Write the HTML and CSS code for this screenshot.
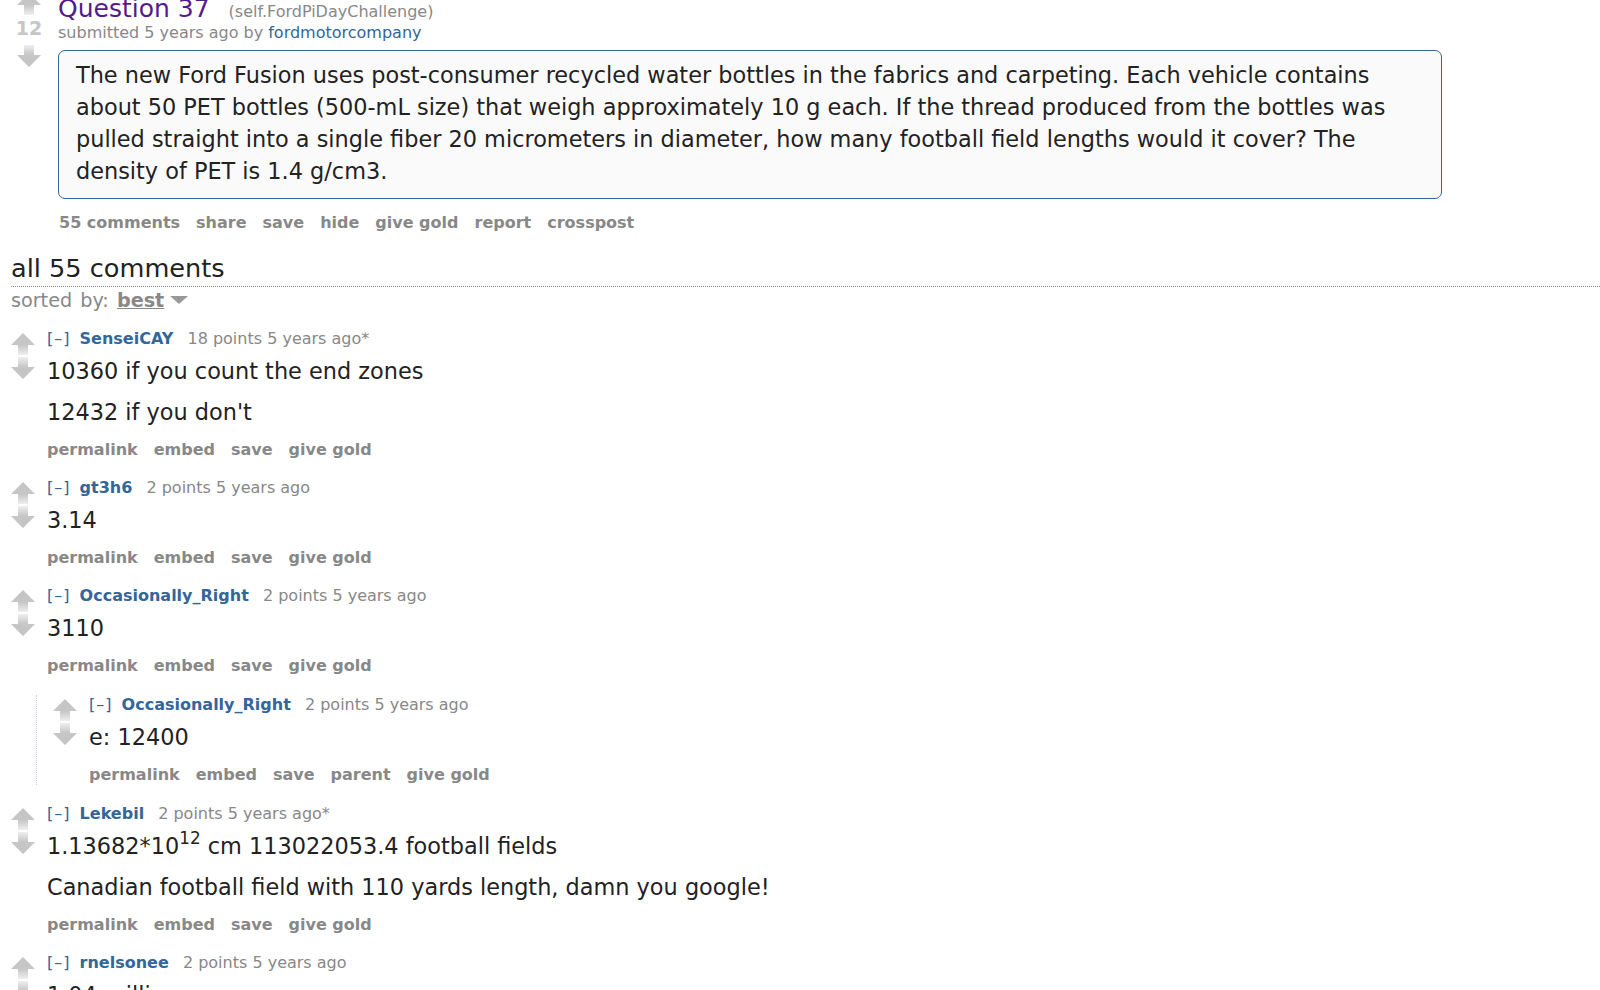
FILE: index.html
```html
<!DOCTYPE html>
<html>
  <head>
    <meta charset="UTF-8">
    <title>Question 37 : FordPiDayChallenge</title>
    <link rel="stylesheet" href="styles.css">
  </head>
  <body>
    <svg class="defs" width="0" height="0">
      <defs>
        <linearGradient id="fade_up" x1="0" y1="0" x2="0" y2="1">
          <stop offset="0" stop-color="#c4c4c4"/>
          <stop offset="0.55" stop-color="#c6c6c6"/>
          <stop offset="1" stop-color="#efefef"/>
        </linearGradient>
        <linearGradient id="fade_down" x1="0" y1="0" x2="0" y2="1">
          <stop offset="0" stop-color="#efefef"/>
          <stop offset="0.45" stop-color="#c6c6c6"/>
          <stop offset="1" stop-color="#c4c4c4"/>
        </linearGradient>
        <symbol id="arrow_up" viewBox="0 0 24 22">
          <path d="M12 0 L24 12 L17 12 L17 22 L7 22 L7 12 L0 12 Z" fill="url(#fade_up)"/>
        </symbol>
        <symbol id="arrow_down" viewBox="0 0 24 22">
          <path d="M7 0 L17 0 L17 10 L24 10 L12 22 L0 10 L7 10 Z" fill="url(#fade_down)"/>
        </symbol>
      </defs>
    </svg>

    <div class="content">
      <!-- 投稿 -->
      <div class="thing link">
        <div class="midcol">
          <svg class="arrow"><use href="#arrow_up"/></svg>
          <div class="score">12</div>
          <svg class="arrow down"><use href="#arrow_down"/></svg>
        </div>
        <div class="entry">
          <p class="title"><a class="title_link" href="#">Question 37</a><span class="domain">(self.FordPiDayChallenge)</span></p>
          <p class="tagline">submitted 5 years ago by <a class="user" href="#">fordmotorcompany</a></p>
          <div class="expando">
            <div class="md">
              <p>The new Ford Fusion uses post-consumer recycled water bottles in the fabrics and carpeting. Each vehicle contains about 50 PET bottles (500-mL size) that weigh approximately 10 g each. If the thread produced from the bottles was pulled straight into a single fiber 20 micrometers in diameter, how many football field lengths would it cover? The density of PET is 1.4 g/cm3.</p>
            </div>
          </div>
          <ul class="buttons">
            <li><a href="#">55 comments</a></li>
            <li><a href="#">share</a></li>
            <li><a href="#">save</a></li>
            <li><a href="#">hide</a></li>
            <li><a href="#">give gold</a></li>
            <li><a href="#">report</a></li>
            <li><a href="#">crosspost</a></li>
          </ul>
        </div>
      </div>

      <!-- コメント -->
      <div class="commentarea">
        <div class="panestack_title">all 55 comments</div>
        <div class="menuarea">sorted by: <a class="selected" href="#">best</a><span class="droparrow"></span></div>

        <div class="sitetable">
          <div class="comment">
            <div class="row">
              <div class="midcol">
                <svg class="arrow"><use href="#arrow_up"/></svg>
                <svg class="arrow"><use href="#arrow_down"/></svg>
              </div>
              <div class="entry">
                <p class="tagline"><a class="expand" href="#">[–]</a> <a class="author" href="#">SenseiCAY</a> 18 points 5 years ago*</p>
                <div class="usertext_body md">
                  <p>10360 if you count the end zones</p>
                  <p>12432 if you don't</p>
                </div>
                <ul class="buttons">
                  <li><a href="#">permalink</a></li>
                  <li><a href="#">embed</a></li>
                  <li><a href="#">save</a></li>
                  <li><a href="#">give gold</a></li>
                </ul>
              </div>
            </div>
          </div>

          <div class="comment">
            <div class="row">
              <div class="midcol">
                <svg class="arrow"><use href="#arrow_up"/></svg>
                <svg class="arrow"><use href="#arrow_down"/></svg>
              </div>
              <div class="entry">
                <p class="tagline"><a class="expand" href="#">[–]</a> <a class="author" href="#">gt3h6</a> 2 points 5 years ago</p>
                <div class="usertext_body md">
                  <p>3.14</p>
                </div>
                <ul class="buttons">
                  <li><a href="#">permalink</a></li>
                  <li><a href="#">embed</a></li>
                  <li><a href="#">save</a></li>
                  <li><a href="#">give gold</a></li>
                </ul>
              </div>
            </div>
          </div>

          <div class="comment has_child">
            <div class="row">
              <div class="midcol">
                <svg class="arrow"><use href="#arrow_up"/></svg>
                <svg class="arrow"><use href="#arrow_down"/></svg>
              </div>
              <div class="entry">
                <p class="tagline"><a class="expand" href="#">[–]</a> <a class="author" href="#">Occasionally_Right</a> 2 points 5 years ago</p>
                <div class="usertext_body md">
                  <p>3110</p>
                </div>
                <ul class="buttons">
                  <li><a href="#">permalink</a></li>
                  <li><a href="#">embed</a></li>
                  <li><a href="#">save</a></li>
                  <li><a href="#">give gold</a></li>
                </ul>
              </div>
            </div>
            <div class="child">
              <div class="comment">
                <div class="row">
                  <div class="midcol">
                    <svg class="arrow"><use href="#arrow_up"/></svg>
                    <svg class="arrow"><use href="#arrow_down"/></svg>
                  </div>
                  <div class="entry">
                    <p class="tagline"><a class="expand" href="#">[–]</a> <a class="author" href="#">Occasionally_Right</a> 2 points 5 years ago</p>
                    <div class="usertext_body md">
                      <p>e: 12400</p>
                    </div>
                    <ul class="buttons">
                      <li><a href="#">permalink</a></li>
                      <li><a href="#">embed</a></li>
                      <li><a href="#">save</a></li>
                      <li><a href="#">parent</a></li>
                      <li><a href="#">give gold</a></li>
                    </ul>
                  </div>
                </div>
              </div>
            </div>
          </div>

          <div class="comment">
            <div class="row">
              <div class="midcol">
                <svg class="arrow"><use href="#arrow_up"/></svg>
                <svg class="arrow"><use href="#arrow_down"/></svg>
              </div>
              <div class="entry">
                <p class="tagline"><a class="expand" href="#">[–]</a> <a class="author" href="#">Lekebil</a> 2 points 5 years ago*</p>
                <div class="usertext_body md">
                  <p>1.13682*10<sup>12</sup> cm 113022053.4 football fields</p>
                  <p>Canadian football field with 110 yards length, damn you google!</p>
                </div>
                <ul class="buttons">
                  <li><a href="#">permalink</a></li>
                  <li><a href="#">embed</a></li>
                  <li><a href="#">save</a></li>
                  <li><a href="#">give gold</a></li>
                </ul>
              </div>
            </div>
          </div>

          <div class="comment">
            <div class="row">
              <div class="midcol">
                <svg class="arrow"><use href="#arrow_up"/></svg>
                <svg class="arrow"><use href="#arrow_down"/></svg>
              </div>
              <div class="entry">
                <p class="tagline"><a class="expand" href="#">[–]</a> <a class="author" href="#">rnelsonee</a> 2 points 5 years ago</p>
                <div class="usertext_body md">
                  <p>1.04 million</p>
                </div>
              </div>
            </div>
          </div>
        </div>
      </div>
    </div>
  </body>
</html>
```

FILE: styles.css
```css
body
{
  margin: 0;
  padding: 0 0 0 11px;
  font-family: "DejaVu Sans", Verdana, sans-serif;
  color: #222;
  background: #fff;
  overflow: hidden;
}
a
{
  text-decoration: none;
}
p
{
  margin: 0;
}
.defs
{
  position: absolute; /* 定義だけなので場所をとらない */
}
.content
{
  margin-top: -7px; /* 少しスクロールした状態 */
}

/* 投稿 */
.link
{
  display: flex;
}
.link .midcol
{
  width: 28px;
  margin-left: 4px;
  display: flex;
  flex-direction: column;
  align-items: center;
}
.arrow
{
  display: block;
  width: 24px;
  height: 22px;
}
.score
{
  margin-top: 2px;
  font-size: 19px;
  line-height: 22px;
  font-weight: bold;
  color: #c6c6c6;
}
.link .arrow.down
{
  margin-top: 6px;
}
.link .entry
{
  margin-left: 15px;
  margin-top: 2px;
}
.title
{
  font-size: 25px;
  line-height: 28px;
}
.title_link
{
  color: #551a8b;
}
.domain
{
  margin-left: 19px;
  font-size: 16px;
  line-height: 16px;
  color: #888;
}
.tagline
{
  font-size: 16px;
  line-height: 20px;
  color: #888;
}
.user
{
  color: #369;
}
.expando
{
  margin-top: 7px;
  width: 1384px;
  box-sizing: border-box;
  border: 1px solid #369;
  border-radius: 7px;
  background: #fafafa;
  padding: 8px 8px 11px 17px;
}
.md p
{
  font-size: 22.4px;
  line-height: 32px;
  color: #222;
}
.buttons
{
  list-style: none;
  margin: 0;
  padding: 0;
  display: flex;
  gap: 16px;
  font-size: 16px;
  line-height: 20px;
  font-weight: bold;
}
.buttons a
{
  color: #888;
}
.link .buttons
{
  margin-top: 14px;
  padding-left: 1px;
}

/* コメント欄 */
.panestack_title
{
  margin-top: 20px;
  padding-bottom: 3px;
  border-bottom: 1px dotted #888;
  font-size: 25.6px;
  line-height: 30px;
  color: #222;
}
.menuarea
{
  margin-top: 3px;
  font-size: 19.2px;
  line-height: 22px;
  color: #888;
  word-spacing: 2px;
}
.menuarea .selected
{
  color: #888;
  font-weight: bold;
  text-decoration: underline;
}
.droparrow
{
  display: inline-block;
  margin-left: 6px;
  border-left: 9px solid transparent;
  border-right: 9px solid transparent;
  border-top: 8px solid #999;
  vertical-align: 3px;
}
.sitetable
{
  margin-top: 17px;
}
.comment
{
  margin-bottom: 18px;
}
.comment.has_child
{
  margin-bottom: 19px;
}
.comment .row
{
  display: flex;
}
.comment .midcol
{
  width: 24px;
  padding-top: 4px;
  display: flex;
  flex-direction: column;
  gap: 2px;
}
.comment .entry
{
  margin-left: 12px;
}
.expand
{
  color: #369;
  letter-spacing: 1px;
  margin-right: 4px;
}
.author
{
  color: #369;
  font-weight: bold;
  margin-right: 9px;
}
.usertext_body
{
  margin-top: 7px;
}
.comment .md p
{
  line-height: 30px;
  margin-bottom: 11px;
}
.comment .md p:last-child
{
  margin-bottom: 0;
}
.md sup
{
  font-size: 0.75em;
  line-height: 0;
  vertical-align: 0.6em;
}
.comment .buttons
{
  margin-top: 13px;
}
.child
{
  margin-top: 19px;
  margin-left: 25px;
  padding-left: 16px;
  border-left: 1px dotted #c8c8f0;
}
```
